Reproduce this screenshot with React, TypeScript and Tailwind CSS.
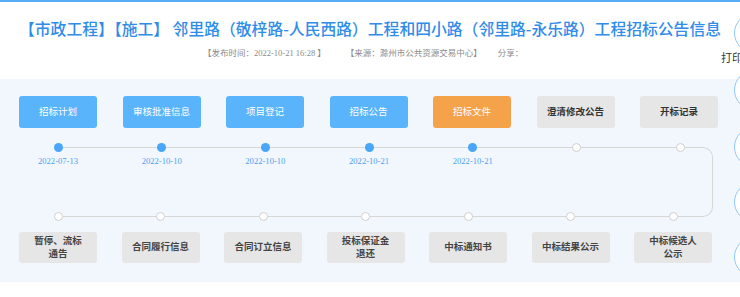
import React from "react";

const serif = { fontFamily: '"Liberation Serif", "Noto Sans CJK SC", serif' };

const row1 = [
  { t: "招标计划", c: "blue", d: "2022-07-13" },
  { t: "审核批准信息", c: "blue", d: "2022-10-10" },
  { t: "项目登记", c: "blue", d: "2022-10-10" },
  { t: "招标公告", c: "blue", d: "2022-10-21" },
  { t: "招标文件", c: "orange", d: "2022-10-21" },
  { t: "澄清修改公告", c: "gray", d: "" },
  { t: "开标记录", c: "gray", d: "" },
];

const row2 = [
  ["暂停、流标", "通告"],
  ["合同履行信息"],
  ["合同订立信息"],
  ["投标保证金", "退还"],
  ["中标通知书"],
  ["中标结果公示"],
  ["中标候选人", "公示"],
];

function Box1({ t, c }: { t: string; c: string }) {
  const cls =
    c === "blue"
      ? "bg-[#5ab4fc] text-white"
      : c === "orange"
      ? "bg-[#f5a34b] text-white"
      : "bg-[#e6e6e6] text-[#333] font-bold";
  return (
    <div
      className={`shrink-0 w-[78px] h-[32px] rounded-[3px] flex items-center justify-center text-[9.5px] ${cls}`}
      style={serif}
    >
      {t}
    </div>
  );
}

export default function App() {
  return (
    <div className="relative w-[740px] h-[297px] bg-white overflow-hidden">
      <div className="h-[2px] bg-[#58adf7]" />
      <div className="h-[77px] flex flex-col items-center">
        <div
          className="mt-[16px] text-[15.8px] leading-[22px] text-[#2f8ce9] font-medium whitespace-nowrap"
          style={{ fontFamily: '"Noto Sans CJK SC", sans-serif' }}
        >
          【市政工程】【施工】 邻里路（敬梓路-人民西路）工程和四小路（邻里路-永乐路）工程招标公告信息
        </div>
        <div
          className="self-start ml-[203px] mt-[7px] flex items-center text-[8.5px] leading-[12px] text-[#8a8a8a] whitespace-nowrap"
          style={serif}
        >
          <span>【发布时间：2022-10-21 16:28 】</span>
          <span className="ml-[20px]">【来源：滁州市公共资源交易中心】</span>
          <span className="ml-[16px]">分享：</span>
        </div>
      </div>
      <div className="bg-[#f2f7fe] pt-[17px] pb-[19px]">
        <div className="flex pl-[19px] gap-[25.5px]">
          {row1.map((b) => (
            <Box1 key={b.t} t={b.t} c={b.c} />
          ))}
        </div>
        <div className="ml-[58px] mt-[19px] w-[655px] h-[70px] border-t border-r border-b border-[#d7d7d7] rounded-r-[10px] flex flex-col justify-between">
          <div className="flex -ml-[51.85px] -mt-[5px]">
            {row1.map((b) => (
              <div key={b.t} className="shrink-0 w-[103.7px] flex flex-col items-center">
                {b.d ? (
                  <div className="w-[9px] h-[9px] rounded-full bg-[#4aa6f8]" />
                ) : (
                  <div className="w-[9px] h-[9px] rounded-full bg-white border border-[#cfcfcf]" />
                )}
                <div
                  className="mt-[3px] h-[12px] text-[8.6px] leading-[12px] text-[#4a9ef2] whitespace-nowrap"
                  style={serif}
                >
                  {b.d}
                </div>
              </div>
            ))}
          </div>
          <div className="flex -ml-[51.25px] -mb-[5px]">
            {row2.map((_, i) => (
              <div key={i} className="shrink-0 w-[102.5px] flex justify-center">
                <div className="w-[9px] h-[9px] rounded-full bg-white border border-[#cfcfcf]" />
              </div>
            ))}
          </div>
        </div>
        <div className="flex pl-[19px] gap-[24.5px] mt-[15px]">
          {row2.map((lines, i) => (
            <div
              key={i}
              className="shrink-0 w-[78px] h-[31px] rounded-[3px] bg-[#e6e6e6] text-[#444] font-bold flex flex-col items-center justify-center text-[9.5px] leading-[13px]"
              style={serif}
            >
              {lines.map((l) => (
                <div key={l}>{l}</div>
              ))}
            </div>
          ))}
        </div>
      </div>
      <div
        className="absolute left-[721px] top-[50px] text-[11px] leading-[14px] text-[#333] whitespace-nowrap"
        style={{ fontFamily: '"Noto Sans CJK SC", sans-serif' }}
      >
        打印
      </div>
      {[13, 70, 127, 182, 237].map((t) => (
        <div
          key={t}
          className="absolute left-[734px] w-[40px] h-[40px] rounded-full bg-white border-[1.5px] border-[#8ec8fb]"
          style={{ top: t }}
        />
      ))}
    </div>
  );
}
